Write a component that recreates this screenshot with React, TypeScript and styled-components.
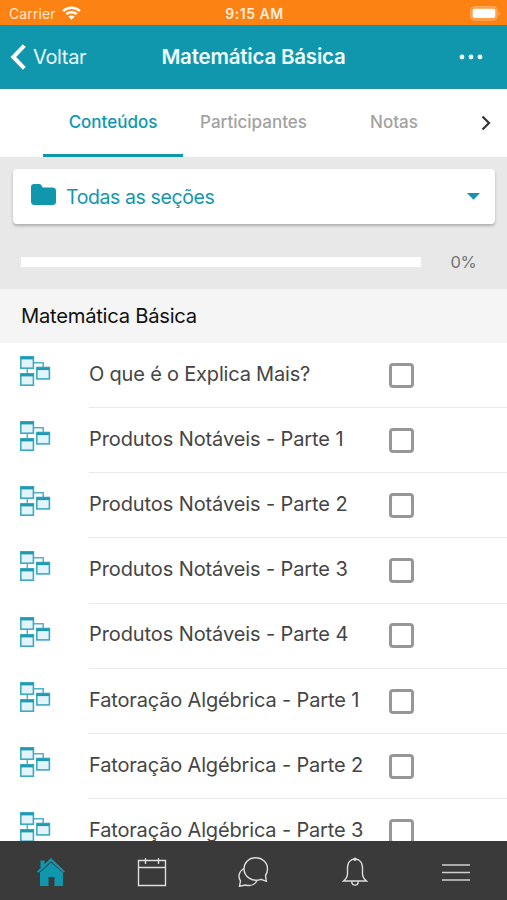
import React from "react";
import styled, { createGlobalStyle } from "styled-components";

const teal = "#1097ae";

const GlobalStyle = createGlobalStyle`
  * { box-sizing: border-box; }
  body { margin: 0; background: #fff; font-family: Inter, "Liberation Sans", sans-serif; }
`;

const Screen = styled.div`
  width: 507px;
  height: 900px;
  display: flex;
  flex-direction: column;
  overflow: hidden;
  background: #fff;
`;

const Label = styled.span<{ $size: number; $spacing?: number; $weight?: number; $color?: string; $top?: number }>`
  font-size: ${(p) => p.$size}px;
  letter-spacing: ${(p) => p.$spacing ?? 0}px;
  font-weight: ${(p) => p.$weight ?? 400};
  color: ${(p) => p.$color ?? "inherit"};
  padding-top: ${(p) => p.$top ?? 0}px;
  line-height: 1.2;
  white-space: nowrap;
`;

const StatusBar = styled.div`
  height: 25px;
  flex: none;
  display: grid;
  grid-template-columns: 1fr auto 1fr;
  align-items: center;
  padding: 2px 6px 0 8px;
  background: #fb8213;
  color: #fff;
`;

const Carrier = styled.div`
  display: flex;
  align-items: center;
  gap: 6px;
  padding-left: 1px;
  color: #ffe9d2;
`;

const BatteryIcon = styled.svg`
  justify-self: end;
  margin-top: -1px;
`;

const NavBar = styled.header`
  height: 64px;
  flex: none;
  display: grid;
  grid-template-columns: 1fr auto 1fr;
  align-items: center;
  padding: 1px 10px 0;
  background: ${teal};
  color: #fff;
  border-bottom: 1px solid #2a8fa3;
`;

const BackButton = styled.div`
  display: flex;
  align-items: center;
  gap: 6px;
  color: #e9fbff;
`;

const MoreIcon = styled.svg`
  justify-self: end;
  margin-right: 14px;
`;

const Tabs = styled.nav`
  height: 68px;
  flex: none;
  display: grid;
  grid-template-columns: 43px 140px 141px 140px 43px;
  background: #fff;
`;

const Tab = styled.div<{ $active?: boolean }>`
  display: flex;
  align-items: center;
  justify-content: center;
  padding-top: ${(p) => (p.$active ? 2 : 0)}px;
  padding-bottom: ${(p) => (p.$active ? 0 : 1)}px;
  color: ${(p) => (p.$active ? teal : "#a2a2a2")};
  border-bottom: ${(p) => (p.$active ? `3px solid ${teal}` : "0")};
`;

const Filters = styled.section`
  height: 132px;
  flex: none;
  padding: 12px 12px 0 13px;
  background: #e8e8e8;
`;

const Select = styled.div`
  height: 55px;
  display: flex;
  align-items: center;
  padding: 0 15px 0 17px;
  gap: 9px;
  background: #fff;
  border-radius: 4px;
  box-shadow: 0 2px 3px rgba(0, 0, 0, 0.25);
  color: ${teal};
`;

const FolderIcon = styled.svg`
  margin-top: -4px;
`;

const Spacer = styled.span`
  flex: 1;
`;

const Progress = styled.div`
  display: flex;
  align-items: center;
  height: 22px;
  margin-top: 27px;
  padding-left: 7.5px;
  gap: 30px;
`;

const Track = styled.div`
  width: 400px;
  height: 10px;
  background: #fff;
`;

const SectionHeading = styled.h2`
  height: 54px;
  flex: none;
  margin: 0;
  padding: 1px 21px 0;
  display: flex;
  align-items: center;
  background: #f5f5f5;
`;

const List = styled.main`
  flex: 1;
  min-height: 0;
  overflow: hidden;
`;

const Row = styled.div`
  height: 65.15px;
  display: grid;
  grid-template-columns: 69px 300px 1fr;
  padding-left: 20px;
`;

const ModuleIcon = styled.svg`
  margin-top: 13px;
`;

const RowTitle = styled.div`
  padding-top: 18.8px;
  border-bottom: 1px solid #e9e9e9;
`;

const RowEnd = styled.div`
  padding-top: 19.8px;
  border-bottom: 1px solid #e9e9e9;
`;

const Checkbox = styled.div`
  width: 25px;
  height: 25px;
  border: 3px solid #979797;
  border-radius: 4px;
  background: #fff;
`;

const TabBar = styled.footer`
  height: 59px;
  flex: none;
  display: grid;
  grid-template-columns: repeat(5, 1fr);
  justify-items: center;
  padding-top: 14px;
  background: #3a3a3a;
`;

const rows: [string, number][] = [
  ["O que é o Explica Mais?", -0.19],
  ["Produtos Notáveis - Parte 1", -0.1],
  ["Produtos Notáveis - Parte 2", -0.1],
  ["Produtos Notáveis - Parte 3", -0.1],
  ["Produtos Notáveis - Parte 4", -0.1],
  ["Fatoração Algébrica - Parte 1", -0.15],
  ["Fatoração Algébrica - Parte 2", -0.16],
  ["Fatoração Algébrica - Parte 3", -0.16],
];

const Scheme = () => (
  <ModuleIcon width="31" height="31" viewBox="0 0 31 31">
    <path d="M13.5 6.7H23.2V11M7.3 11.5V17.5" fill="none" stroke="#54b0c4" strokeWidth="1.5" />
    {[[0.8, 0.8], [16.8, 11.5], [0.8, 17.8]].map(([x, y]) => (
      <g key={`${x}-${y}`}>
        <rect x={x} y={y} width="12.6" height="11.4" fill="#e2f4fd" stroke="#3faac0" strokeWidth="1.6" />
        <rect x={x} y={y} width="12.6" height="2.6" fill="#2299b3" />
      </g>
    ))}
  </ModuleIcon>
);

export default function App() {
  return (
    <Screen>
      <GlobalStyle />
      <StatusBar>
        <Carrier>
          <Label $size={14} $spacing={0.1} $top={1}>Carrier</Label>
          <svg width="19" height="14" viewBox="0 0 19 14">
            <path d="M1.2 5.2C5.8 .7 13.2 .7 17.8 5.2M4.3 8.2C7.1 5.5 11.9 5.5 14.7 8.2" fill="none" stroke="#fff" strokeWidth="2.5" />
            <path d="M9.5 13.7L6.4 10.5C8.2 9 10.8 9 12.6 10.5Z" fill="#fff" />
          </svg>
        </Carrier>
        <Label $size={14} $weight={600} $spacing={0.5} $top={1} $color="#ffeedd">9:15 AM</Label>
        <BatteryIcon width="31" height="15" viewBox="0 0 31 15">
          <rect x=".6" y=".6" width="26.5" height="13.6" rx="4" fill="#ff9d45" stroke="#ffad62" />
          <rect x="2.7" y="2.7" width="22.6" height="9.4" rx="2" fill="#fff" />
          <path d="M28.6 5Q31 7.4 28.6 9.8Z" fill="#ffb878" />
        </BatteryIcon>
      </StatusBar>

      <NavBar>
        <BackButton>
          <svg width="17" height="26" viewBox="0 0 17 26">
            <path d="M14.3 1.7L3.3 13L14.3 24.3" fill="none" stroke="#fff" strokeWidth="4" />
          </svg>
          <Label $size={20} $spacing={-0.35}>Voltar</Label>
        </BackButton>
        <Label $size={20.5} $weight={600} $spacing={-0.2} $color="#f0fcff">Matemática Básica</Label>
        <MoreIcon width="24" height="6" viewBox="0 0 24 6">
          <circle cx="3" cy="3" r="2.4" fill="#eefcff" />
          <circle cx="12" cy="3" r="2.4" fill="#eefcff" />
          <circle cx="21" cy="3" r="2.4" fill="#eefcff" />
        </MoreIcon>
      </NavBar>

      <Tabs>
        <span />
        <Tab $active><Label $size={17} $weight={500}>Conteúdos</Label></Tab>
        <Tab><Label $size={17} $weight={500}>Participantes</Label></Tab>
        <Tab><Label $size={17} $weight={500}>Notas</Label></Tab>
        <Tab>
          <svg width="10" height="16" viewBox="0 0 10 16">
            <path d="M1.5 1.5L8 8L1.5 14.5" fill="none" stroke="#333" strokeWidth="2.2" />
          </svg>
        </Tab>
      </Tabs>

      <Filters>
        <Select>
          <FolderIcon width="27" height="23" viewBox="0 0 27 23">
            <path d="M4 1H9.3Q10.6 1 11.3 2.2L12.8 4.5H22.5Q26 4.5 26 8V18.5Q26 22 22.5 22H4.500Q1 22 1 18.5V4Q1 1 4 1Z" fill={teal} />
          </FolderIcon>
          <Label $size={19.5} $spacing={-0.4} $top={2}>Todas as seções</Label>
          <Spacer />
          <svg width="13" height="7" viewBox="0 0 13 7">
            <path d="M0 0H13L6.500 6.800Z" fill={teal} />
          </svg>
        </Select>
        <Progress>
          <Track />
          <Label $size={16.5} $spacing={-0.5} $top={2} $color="#737373">0%</Label>
        </Progress>
      </Filters>

      <SectionHeading>
        <Label $size={20.2} $spacing={-0.25} $color="#111">Matemática Básica</Label>
      </SectionHeading>

      <List>
        {rows.map(([title, spacing]) => (
          <Row key={title}>
            <Scheme />
            <RowTitle>
              <Label $size={20} $spacing={spacing} $color="#454545">{title}</Label>
            </RowTitle>
            <RowEnd><Checkbox /></RowEnd>
          </Row>
        ))}
      </List>

      <TabBar>
        <svg width="30" height="32" viewBox="0 0 30 32">
          <path d="M1 16.500L4.500 13V5.500H8.500V9.200L15 3L29 16.500L27.300 17.800L15 6.200L2.500 17.800Z" fill={teal} />
          <path d="M4 17.500L15 7.400L27 18V31H18.500V22H12.500V31H4Z" fill={teal} />
        </svg>
        <svg width="30" height="32" viewBox="0 0 30 32" fill="none" stroke="#dedede" strokeWidth="1.400">
          <path d="M1.500 5.500H28.500V30.500H1.500ZM1.500 12.500H28.500M8.500 3V9M21.500 3V9" />
        </svg>
        <svg width="32" height="32" viewBox="0 0 32 32" fill="none" stroke="#dedede" strokeWidth="1.400">
          <path d="M18.500 2.700C25.500 2.700 30.500 7.700 30.500 13.700C30.500 17 29.500 19 28.500 20.500L29.300 26.300L24 24.300C15 27.500 7 21.500 7 13.700C7 7.700 12 2.700 18.500 2.700Z" />
          <path d="M6.800 13.500C1.500 17 .800 22 3.500 26L2.500 31.200L8.500 30C14 31.500 18 29.500 20 25.500" />
        </svg>
        <svg width="26" height="32" viewBox="0 0 26 32" fill="none" stroke="#dedede" strokeWidth="1.400">
          <path d="M13 4C8 4 5.500 8 5.500 12.500V18.500C5.500 22 4 24 1.500 26H24.500C22 24 20.500 22 20.500 18.500V12.500C20.500 8 18 4 13 4ZM9.800 26.500C9.800 31.300 16.200 31.300 16.200 26.500" />
          <circle cx="13" cy="4.200" r="1" />
        </svg>
        <svg width="28" height="32" viewBox="0 0 28 32" stroke="#cfcfcf" strokeWidth="1.600">
          <path d="M0 10H28M0 17.500H28M0 25H28" />
        </svg>
      </TabBar>
    </Screen>
  );
}
